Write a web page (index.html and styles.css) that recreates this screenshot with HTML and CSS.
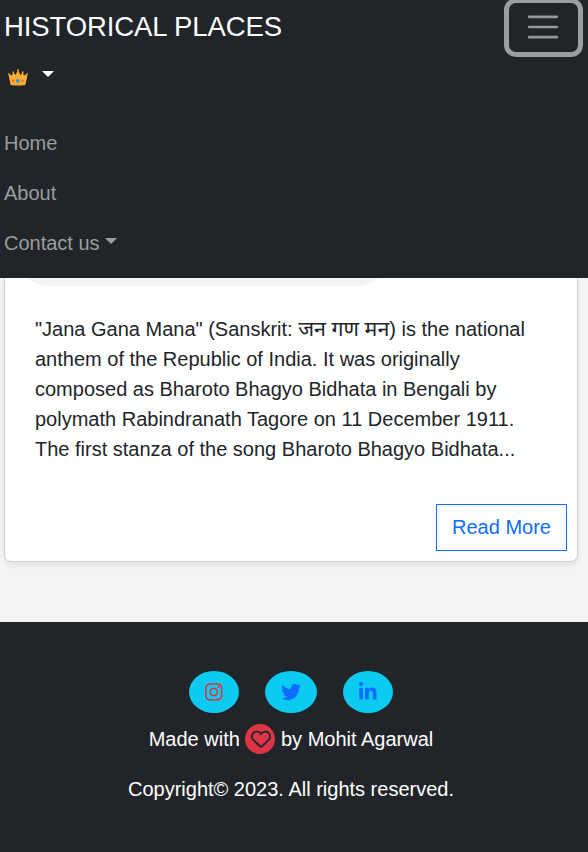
FILE: index.html
```
<!DOCTYPE html>
<html lang="en">
<head>
<meta charset="utf-8">
<title>Historical Places</title>
<link rel="stylesheet" href="styles.css">
</head>
<body>
<nav class="navbar">
  <div class="navbar-top">
    <a class="brand">HISTORICAL PLACES</a>
    <button class="toggler" aria-label="Toggle navigation">
      <svg viewBox="0 0 30 30" width="37.5" height="37.5"><path stroke="#959899" stroke-linecap="round" stroke-miterlimit="10" stroke-width="2" d="M4 7h22M4 15h22M4 23h22"/></svg>
    </button>
  </div>
  <div class="theme">
    <svg class="crown" viewBox="0 0 20 17" width="20" height="17">
      <path fill="#ffac33" d="M2.600 15.900 0.300 4.600 3.900 6.600 5.200 3.500 7.600 6.100 10 .8 12.400 6.100 14.800 3.500 16.100 6.600 19.700 4.600 17.400 15.900Q10 16.900 2.600 15.900z"/>
      <g fill="#f4a22c"><circle cx=".8" cy="4.700" r=".7"/><circle cx="5.200" cy="3.200" r=".9"/><circle cx="10" cy="1" r=".9"/><circle cx="14.800" cy="3.200" r=".9"/><circle cx="19.200" cy="4.700" r=".7"/></g>
      <circle fill="#1b9fe0" cx="9.800" cy="11.800" r="1.900"/>
      <circle fill="#ee4a38" cx="5.200" cy="11.800" r="1"/><circle fill="#ee4a38" cx="14.500" cy="11.800" r="1"/>
    </svg>
    <span class="caret"></span>
  </div>
  <div class="links">
    <a>Home</a>
    <a>About</a>
    <a>Contact us<span class="caret caret-inline"></span></a>
  </div>
</nav>
<main>
  <article class="card">
    <div class="player"></div>
    <p class="text">"Jana Gana Mana" (Sanskrit: <span class="hindi">जन गण मन</span>) is the national<br>anthem of the Republic of India. It was originally<br>composed as Bharoto Bhagyo Bidhata in Bengali by<br>polymath Rabindranath Tagore on 11 December 1911.<br>The first stanza of the song Bharoto Bhagyo Bidhata...</p>
    <a class="more">Read More</a>
  </article>
</main>
<footer>
  <div class="social">
    <a class="pill instagram"><svg viewBox="0 0 448 512" width="17.5" height="20"><path d="M224.1 141c-63.6 0-114.9 51.3-114.9 114.9s51.3 114.9 114.9 114.9S339 319.500 339 255.900 287.700 141 224.100 141zm0 189.600c-41.100 0-74.700-33.500-74.700-74.700s33.500-74.700 74.700-74.700 74.700 33.500 74.700 74.700-33.600 74.700-74.700 74.700zm146.400-194.300c0 14.900-12 26.800-26.800 26.800-14.900 0-26.800-12-26.800-26.800s12-26.800 26.800-26.800 26.800 12 26.800 26.800zm76.100 27.200c-1.700-35.900-9.900-67.700-36.200-93.900-26.200-26.200-58-34.400-93.900-36.200-37-2.100-147.900-2.100-184.900 0-35.800 1.700-67.600 9.900-93.900 36.100s-34.400 58-36.200 93.900c-2.100 37-2.100 147.900 0 184.900 1.700 35.900 9.900 67.700 36.200 93.900s58 34.400 93.900 36.200c37 2.100 147.900 2.100 184.900 0 35.900-1.700 67.700-9.900 93.900-36.200 26.200-26.200 34.400-58 36.200-93.900 2.100-37 2.100-147.800 0-184.800zM398.800 388c-7.800 19.600-22.900 34.700-42.600 42.600-29.500 11.700-99.500 9-132.100 9s-102.700 2.600-132.100-9c-19.600-7.800-34.700-22.900-42.600-42.600-11.700-29.500-9-99.500-9-132.100s-2.600-102.700 9-132.100c7.800-19.600 22.900-34.700 42.600-42.600 29.500-11.700 99.500-9 132.100-9s102.700-2.600 132.100 9c19.600 7.800 34.700 22.900 42.600 42.600 11.700 29.500 9 99.500 9 132.100s2.700 102.700-9 132.100z"/></svg></a>
    <a class="pill"><svg viewBox="0 0 512 512" width="20" height="20"><path d="M459.370 151.716c.325 4.548.325 9.097.325 13.645 0 138.720-105.583 298.558-298.558 298.558-59.452 0-114.680-17.219-161.137-47.106 8.447.974 16.568 1.299 25.340 1.299 49.055 0 94.213-16.568 130.274-44.832-46.132-.975-84.792-31.188-98.112-72.772 6.498.974 12.995 1.624 19.818 1.624 9.421 0 18.843-1.300 27.614-3.573-48.081-9.747-84.143-51.980-84.143-102.985v-1.299c13.969 7.797 30.214 12.670 47.431 13.319-28.264-18.843-46.781-51.005-46.781-87.391 0-19.492 5.197-37.360 14.294-52.954 51.655 63.675 129.300 105.258 216.365 109.807-1.624-7.797-2.599-15.918-2.599-24.040 0-57.828 46.782-104.934 104.934-104.934 30.213 0 57.502 12.670 76.670 33.137 23.715-4.548 46.456-13.320 66.599-25.340-7.798 24.366-24.366 44.833-46.132 57.827 21.117-2.273 41.584-8.122 60.426-16.243-14.292 20.791-32.161 39.308-52.628 54.253z"/></svg></a>
    <a class="pill"><svg viewBox="0 0 448 512" width="17.5" height="20"><path d="M100.280 448H7.400V148.900h92.880zM53.790 108.100C24.090 108.100 0 83.500 0 53.800a53.790 53.790 0 0 1 107.580 0c0 29.700-24.100 54.300-53.790 54.300zM447.900 448h-92.680V302.400c0-34.700-.7-79.200-48.290-79.200-48.290 0-55.690 37.700-55.690 76.700V448h-92.780V148.900h89.080v40.800h1.300c12.400-23.500 42.690-48.300 87.880-48.300 94 0 111.280 61.900 111.280 142.300V448z"/></svg></a>
  </div>
  <p class="credit">Made with <span class="heart"><svg viewBox="0 0 512 512" width="20" height="20"><path d="M225.800 468.200l-2.500-2.300L48.100 303.200C17.400 274.700 0 234.700 0 192.800v-3.300c0-70.400 50-130.800 119.200-144C158.600 37.900 198.900 47 231 69.600c9 6.400 17.400 13.800 25 22.300c4.200-4.800 8.700-9.200 13.500-13.300c3.700-3.200 7.500-6.200 11.500-9c32.100-22.600 72.400-31.700 111.800-24.200C462 58.600 512 119.100 512 189.500v3.300c0 41.900-17.400 81.900-48.100 110.400L288.700 465.900l-2.500 2.300c-8.200 7.600-19 11.900-30.200 11.900s-22-4.200-30.200-11.900zM239.100 145c-.4-.3-.7-.7-1-1.100l-17.800-20c-23.100-25.900-58-37.700-92-31.200C81.600 101.500 48 142.100 48 189.500v3.300c0 28.500 11.900 55.800 32.800 75.200L256 430.700 431.200 268c20.900-19.400 32.800-46.700 32.800-75.200v-3.300c0-47.300-33.600-88-80.100-96.900c-34-6.500-69 5.400-92 31.200l-17.900 20c-.3.400-.7.700-1 1.100c-4.500 4.500-10.600 7-16.900 7s-12.400-2.500-16.900-7z"/></svg></span> by Mohit Agarwal</p>
  <p class="copy">Copyright© 2023. All rights reserved.</p>
</footer>
</body>
</html>
```
FILE: styles.css
```
* { box-sizing: border-box; }
body {
  margin: 0;
  height: 852px;
  overflow: hidden;
  display: flex;
  flex-direction: column;
  background: #f4f4f4;
  color: #212529;
  font: 20px/30px "Liberation Sans", Arial, "Noto Sans", sans-serif;
}
p { margin: 0; }
svg { display: block; }
.navbar {
  height: 278px;
  flex: none;
  background: #212529;
  padding: 0 5px 0 4px;
}
.navbar-top { display: flex; justify-content: space-between; height: 57px; }
.brand { font-size: 27.5px; letter-spacing: -.1px; line-height: 40px; padding-top: 7px; color: #fff; white-space: nowrap; }
.toggler {
  display: flex;
  align-items: center;
  justify-content: center;
  width: 79px;
  height: 59px;
  margin-top: -2px;
  padding: 0;
  background: none;
  border: 5px solid #9b9d9e;
  border-radius: 12px;
}
.toggler svg { margin: 0 1px 1px 0; width: 38px; height: 38px; }
.theme { display: flex; gap: 14px; padding: 12px 0 0 4px; height: 61px; color: #fff; }
.caret {
  width: 0;
  height: 0;
  margin-top: 2px;
  border-top: 6px solid;
  border-left: 6px solid transparent;
  border-right: 6px solid transparent;
}
.links { display: flex; flex-direction: column; color: #9b9d9e; }
.links a { height: 50px; padding-top: 10px; }
.caret-inline { display: inline-block; margin: 0 0 0 5px; vertical-align: 6px; }
main { flex: none; height: 344px; padding: 0 10px 60px 4px; }
.card {
  display: flex;
  flex-direction: column;
  height: 284px;
  background: #fff;
  border: 1px solid #cfd0d0;
  border-top: 0;
  border-radius: 0 0 7px 7px;
  box-shadow: 0 3px 6px rgba(0, 0, 0, .08);
}
.player { width: 374px; height: 8px; margin-left: 11px; overflow: hidden; }
.player::before {
  content: "";
  display: block;
  height: 66px;
  margin-top: -58px;
  border-radius: 33px;
  background: #f1f3f4;
}
.text { margin: 28px 0 0 30px; height: 150px; white-space: nowrap; }
.hindi { font-family: "Noto Sans Devanagari", "Noto Sans", sans-serif; font-size: 21.4px; line-height: 1; }
.more {
  align-self: flex-end;
  width: 131px;
  height: 47px;
  margin: 40px 10px 0 0;
  border: 1px solid #0d6efd;
  color: #0d6efd;
  text-align: center;
  line-height: 45px;
}
footer { flex: 1; background: #212529; color: #fff; text-align: center; padding-top: 49px; }
.social { display: flex; justify-content: center; gap: 26px; padding-right: 6px; }
.pill {
  display: flex;
  align-items: center;
  justify-content: center;
  width: 50px;
  height: 42px;
  border-radius: 50%;
  background: #0dcaf0;
}
.pill:nth-child(2) { width: 52px; }
.pill svg { fill: #0d6efd; }
.instagram svg { fill: #dc3545; }
.credit { display: flex; justify-content: center; margin-top: 11px; padding-right: 6px; white-space: pre; }
.heart {
  display: flex;
  align-items: center;
  justify-content: center;
  width: 30px;
  height: 30px;
  padding-left: 1px;
  border-radius: 50%;
  background: #dc3545;
}
.heart svg { fill: #212529; }
.copy { margin-top: 20px; padding-right: 6px; }
```
